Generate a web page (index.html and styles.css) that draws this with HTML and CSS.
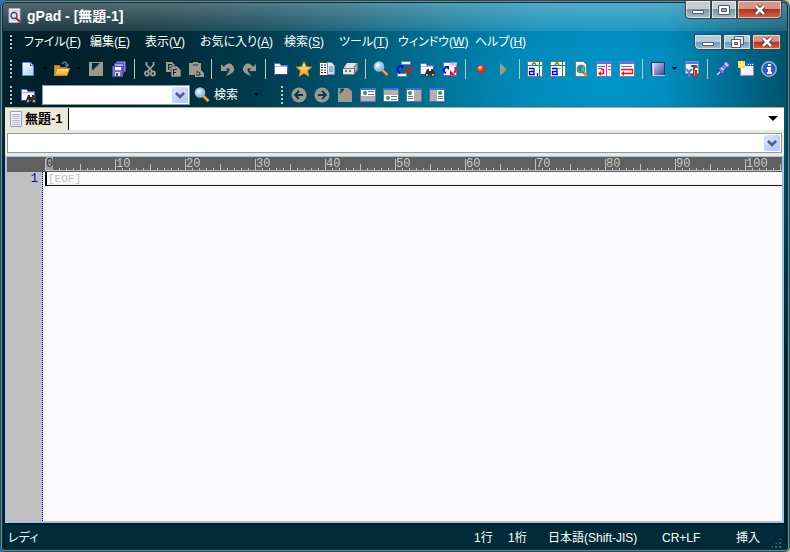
FILE: index.html
```html
<!DOCTYPE html>
<html lang="ja">
<head>
<meta charset="utf-8">
<title>gPad - [無題-1]</title>
<link rel="stylesheet" href="styles.css">
</head>
<body>
<svg class="defs" aria-hidden="true">
  <defs>
    <linearGradient id="paper" x1="0" y1="0" x2="1" y2="1"><stop offset="0" stop-color="#fff"/><stop offset="1" stop-color="#a9cdf5"/></linearGradient>
    <linearGradient id="gold" x1="0" y1="0" x2="0" y2="1"><stop offset="0" stop-color="#fff0a0"/><stop offset="1" stop-color="#f0a010"/></linearGradient>
    <linearGradient id="violet" x1="0" y1="0" x2="1" y2="1"><stop offset="0" stop-color="#dcdcff"/><stop offset="1" stop-color="#3c3c98"/></linearGradient>
    <radialGradient id="lens" cx=".35" cy=".35"><stop offset="0" stop-color="#fff"/><stop offset="1" stop-color="#8cc4ee"/></radialGradient>
    <radialGradient id="ball" cx=".35" cy=".3"><stop offset="0" stop-color="#ffd8c8"/><stop offset="1" stop-color="#c83418"/></radialGradient>
    <symbol id="folder" viewBox="0 0 16 16"><path d="M1.500 2.500h5l1.500 2h6.500v9h-13z" fill="#fff" stroke="#7468c8"/><path d="M2 5.500h12" stroke="#b8b0f0"/><path d="M2 13.500h13v-8" fill="none" stroke="#4838a0"/></symbol>
    <symbol id="binoc" viewBox="0 0 10 8"><path d="M2 0h2v2h2V0h2l2 5v3H6V5H4v3H0V5z" fill="#333"/><path d="M1 5h2v2H1zM7 5h2v2H7z" fill="#aaa"/></symbol>
    <symbol id="glass" viewBox="0 0 16 16"><path d="M9.500 9.500l5 5" stroke="#70501c" stroke-width="3.500"/><path d="M9.500 9l5 5" stroke="#eeb84c" stroke-width="2"/><circle cx="6" cy="5.500" r="4.700" fill="url(#lens)" stroke="#9db6d0" stroke-width="1.300"/></symbol>
    <symbol id="pane" viewBox="0 0 16 16"><path d="M.5 1.500h15v13H.5z" fill="#b0b0b0" stroke="#707078"/><path d="M0 1h16v2H0z" fill="#386fd8"/></symbol>
    <symbol id="card" viewBox="0 0 14 6"><path d="M0 0h14v6H0z" fill="#fff"/><circle cx="4" cy="3" r="2" fill="#219b68"/><path d="M7 1.500h6M7 4.500h6" stroke="#5878a8"/></symbol>
    <symbol id="doc" viewBox="0 0 16 16"><path d="M.5.5h15v15H.5z" fill="#f4f4ff" stroke="#777a90"/><path d="M1 1h14v2H1z" fill="#4a78e8"/></symbol>
    <symbol id="chev" viewBox="0 0 16 16"><path d="M4 6l4 4 4-4" fill="none" stroke="#4a6185" stroke-width="2.500"/></symbol>
    <symbol id="down" viewBox="0 0 7 4"><path d="M1 0h5L3.500 3z" fill="#000"/></symbol>
  </defs>
</svg>

<main class="window">
  <header class="titlebar">
    <svg class="appicon" viewBox="0 0 14 16"><path d="M1 .5h11v14H1z" fill="#f4f2f8" stroke="#b8a8bc"/><path d="M3 3h7M3 12h5" stroke="#c8a8a8"/><circle cx="6" cy="7.500" r="3" fill="#dce8ff" stroke="#404c88" stroke-width="1.500"/><path d="M8 10l4 4" stroke="#902828" stroke-width="2"/></svg>
    <h1>gPad - [無題-1]</h1>
    <div class="controls">
      <button aria-label="最小化"><svg viewBox="0 0 14 12"><path d="M1.500 6.500h11v3h-11z" fill="#fff" stroke="#555b68"/></svg></button>
      <button aria-label="最大化"><svg viewBox="0 0 14 12"><path d="M1.500 1.500h11v9h-11z" fill="#fff" stroke="#555b68"/><path d="M4.500 4.500h5v3h-5z" fill="#9ab" stroke="#555b68"/></svg></button>
      <button class="close" aria-label="閉じる"><svg viewBox="0 0 14 12"><path d="M3 2l8 8M11 2l-8 8" stroke="#533" stroke-width="4.500"/><path d="M3 2l8 8M11 2l-8 8" stroke="#fff" stroke-width="2.500"/></svg></button>
    </div>
  </header>

  <nav class="menubar">
    <i class="grip"></i>
    <div class="menus">
      <button>ファイル(<u>F</u>)</button><button>編集(<u>E</u>)</button><button>表示(<u>V</u>)</button><button>お気に入り(<u>A</u>)</button><button>検索(<u>S</u>)</button><button>ツール(<u>T</u>)</button><button>ウィンドウ(<u>W</u>)</button><button>ヘルプ(<u>H</u>)</button>
    </div>
    <div class="controls child">
      <button aria-label="文書を最小化"><svg viewBox="0 0 14 12"><path d="M1.500 6.500h11v3h-11z" fill="#fff" stroke="#555b68"/></svg></button>
      <button aria-label="文書を元に戻す"><svg viewBox="0 0 14 12"><path d="M4.500.5h9v8h-9z" fill="#dde6f0" stroke="#555b68"/><path d="M1.500 3.500h9v8h-9z" fill="#fff" stroke="#555b68"/><path d="M4.500 6.500h3v2h-3z" fill="#9ab" stroke="#555b68"/></svg></button>
      <button class="close" aria-label="文書を閉じる"><svg viewBox="0 0 14 12"><path d="M3 2l8 8M11 2l-8 8" stroke="#533" stroke-width="4.500"/><path d="M3 2l8 8M11 2l-8 8" stroke="#fff" stroke-width="2.500"/></svg></button>
    </div>
  </nav>

  <div class="toolbar main">
    <i class="grip"></i>
    <button class="tool" aria-label="新規作成"><svg viewBox="0 0 16 16"><path d="M2.500 1.500h8l3 3v10h-11z" fill="url(#paper)" stroke="#5e8fd8"/><path d="M10.500 1.500v3h3" fill="#dfeeff" stroke="#3868b8"/></svg></button>
    <button class="drop" aria-label="新規作成の種類"><svg><use href="#down"/></svg></button>
    <button class="tool" aria-label="開く"><svg viewBox="0 0 16 16"><path d="M.5 4.500h5l1 2h6v8h-12z" fill="#d89828" stroke="#b87818"/><path d="M3 7.500h12.500L13 14.500H.5z" fill="url(#gold)" stroke="#c88820"/><path d="M8 3c2-3 5-2 5 1" fill="none" stroke="#5f7888" stroke-width="1.500"/><path d="M10.500 3.500h5l-2.500 3z" fill="#5f7888"/></svg></button>
    <button class="drop" aria-label="最近のファイル"><svg><use href="#down"/></svg></button>
    <button class="tool" aria-label="保存"><svg viewBox="0 0 16 16"><path d="M1 1h14v14H1z" fill="#9c988c"/><path d="M4 2h8L5 9H4z" fill="#052a36"/></svg></button>
    <button class="tool" aria-label="すべて保存"><svg viewBox="0 0 16 16"><path d="M5.500.5h9v10h-9z" fill="#8c88e0" stroke="#5350a8"/><path d="M3.500 2.500h9v10h-9z" fill="#a4a0f0" stroke="#5350a8"/><path d="M1.500 5.500h10v10h-10z" fill="#7470d0" stroke="#5350a8"/><path d="M4 6h6v3H4z" fill="#fff"/><path d="M4 11h5v4H4z" fill="#ddf"/><path d="M5 12h2v3H5z" fill="#446"/></svg></button>
    <i class="sep"></i>
    <button class="tool" aria-label="切り取り"><svg viewBox="0 0 16 16" fill="none" stroke="#a09c90" stroke-width="1.800"><path d="M4.500 1v3L10 10M11.500 1v3L6 10"/><circle cx="5" cy="12.500" r="2"/><circle cx="11" cy="12.500" r="2"/></svg></button>
    <button class="tool" aria-label="コピー"><svg viewBox="0 0 16 16"><path d="M1 1h6l3 3v7H1z" fill="#a09c90"/><path d="M6 5h6l4 4v7H6z" fill="#a09c90" stroke="#052a36" stroke-width=".6"/><path d="M3 3.500h4M3 6.500h2M3.500 3v6M8 8.500h4M8 11.500h3M8.500 8v6" stroke="#052a36"/></svg></button>
    <button class="tool" aria-label="貼り付け"><svg viewBox="0 0 16 16"><path d="M1 2h4V1h5v1h3v7l3 3v4H7v-2H1z" fill="#9c988c"/><path d="M8 11h3l1 2v1H8M5 4h5" stroke="#0a3a48" fill="none"/></svg></button>
    <i class="sep"></i>
    <button class="tool" aria-label="元に戻す"><svg viewBox="0 0 16 16"><path d="M2 3v7h7L7 8c3-2 5 0 2 4l-2 3c7-2 10-6 7-10-2-4-7-3-9 1z" fill="#9c988c"/></svg></button>
    <button class="tool" aria-label="やり直し"><svg viewBox="0 0 16 16"><path d="M14 3v7H7l2-2C6 6 4 8 7 12l2 3C2 13-1 9 2 5c2-4 7-3 9 1z" fill="#9c988c"/></svg></button>
    <i class="sep"></i>
    <button class="tool" aria-label="フォルダ"><svg><use href="#folder"/></svg></button>
    <button class="tool" aria-label="お気に入り"><svg viewBox="0 0 16 16"><path d="M8 .8l2.200 5 5.300.4-4 3.500 1.200 5.500L8 12.300l-4.700 2.900 1.200-5.500-4-3.500 5.300-.4z" fill="url(#gold)" stroke="#d89018"/></svg></button>
    <button class="tool" aria-label="アウトライン"><svg viewBox="0 0 16 16"><path d="M.5 1.500h8v13h-8z" fill="#fff" stroke="#444"/><path d="M2 4h2M2 6.500h2M2 9h2M2 11.500h2M5 4h2M5 6.500h2M5 9h2M5 11.500h2" stroke="#223"/><path d="M8.500 1.500h4l3 3v9h-7z" fill="url(#paper)" stroke="#7890b8"/><path d="M10 6h4M10 8h4M10 10h4" stroke="#5878a8"/></svg></button>
    <button class="tool" aria-label="キーボードマクロ"><svg viewBox="0 0 16 16"><path d="M5 2h11v7l-4 5H1V8z" fill="#777"/><path d="M5 2h10l-3 3H3zM3 5h9v2H2zM1 8h11v5H1z" fill="#e4e4e4"/><path d="M13 5l2-2v5l-2 3z" fill="#aaa"/><path d="M3 9h2v2H3zM7 9h2v2H7z" fill="#777"/></svg></button>
    <i class="sep"></i>
    <button class="tool" aria-label="検索"><svg><use href="#glass"/></svg></button>
    <button class="tool" aria-label="置換"><svg viewBox="0 0 16 16"><path d="M5.500.5h9v3h-9zM1.500 12.500h9v3h-9z" fill="#eef4ff" stroke="#6684b0"/><path d="M4 5c-4 2-3 6 0 7" fill="none" stroke="#0010e8" stroke-width="2"/><path d="M2 4h5v4z" fill="#0010e8"/><path d="M12 11c3-2 3-4 2-6" fill="none" stroke="#f01010" stroke-width="2"/><path d="M9 7v5h5z" fill="#f01010"/></svg></button>
    <button class="tool" aria-label="ファイルから検索"><svg viewBox="0 0 16 16"><use href="#folder" width="16" height="16"/><use href="#binoc" x="6" y="8" width="10" height="8"/></svg></button>
    <button class="tool" aria-label="ファイルの置換"><svg viewBox="0 0 16 16"><path d="M1.500 1.500h13v13h-13z" fill="#fff" stroke="#7468c8"/><path d="M8 1.500h7v3H8z" fill="#b8c4f0"/><path d="M4 6c-3 2-3 5 0 6" fill="none" stroke="#0010e8" stroke-width="2"/><path d="M2 5h5v4z" fill="#0010e8"/><path d="M12 12c2-2 2-4 1-6" fill="none" stroke="#f01010" stroke-width="2"/><path d="M8 9v5h5z" fill="#f01010"/></svg></button>
    <i class="sep"></i>
    <button class="tool" aria-label="マクロの記録"><svg viewBox="0 0 16 16"><circle cx="8" cy="8" r="4" fill="url(#ball)" stroke="#b03820"/></svg></button>
    <button class="tool" aria-label="マクロの再生"><svg viewBox="0 0 16 16"><path d="M4 2l7 6.500L4 15z" fill="#9c988c"/></svg></button>
    <i class="sep"></i>
    <button class="tool" aria-label="半角に変換"><svg viewBox="0 0 16 16"><path d="M.5.5h15v15H.5z" fill="#fff" stroke="#777"/><path d="M0 4.500h16M12.500 0v16" stroke="#15837c"/><path d="M5 4l2-3 2 3" fill="none" stroke="#8a8400" stroke-width="1.500"/><path d="M2 7.500h5v6H2.500v-3H7M7 13.500h1M10.500 12v3" fill="none" stroke="#0000e8" stroke-width="1.300"/></svg></button>
    <button class="tool" aria-label="全角に変換"><svg viewBox="0 0 16 16"><path d="M.5.5h15v15H.5z" fill="#fff" stroke="#777"/><path d="M0 4.500h16M12.500 0v16" stroke="#15837c"/><path d="M5 4l2-3 2 3" fill="none" stroke="#8a8400" stroke-width="1.500"/><path d="M2 7.500h5v6H2.500v-3H7M7 13.500h1" fill="none" stroke="#0000e8" stroke-width="1.300"/><path d="M8.500 8l1-1 1 1" fill="none" stroke="#666"/></svg></button>
    <button class="tool" aria-label="ブラウザで表示"><svg viewBox="0 0 16 16"><path d="M2.500.5h8l3 3v12h-11z" fill="#f4f4f4" stroke="#777"/><path d="M10 11l4 4" stroke="#c89028" stroke-width="2.500"/><circle cx="8" cy="8" r="4" fill="#5ca8d8" stroke="#4878a0"/><path d="M5 7l3-3 2 2-2 2 1 3-3-1z" fill="#1d9a38"/></svg></button>
    <button class="tool" aria-label="折り返し位置"><svg viewBox="0 0 16 16"><use href="#doc" width="16" height="16"/><path d="M2 5.500h7M2 7.500h4M12 5.500h3M12 8.500h3" stroke="#777"/><path d="M10.500 3v12" stroke="#f020d8"/><path d="M5 8.500h2.500v4H4" fill="none" stroke="#e81818" stroke-width="1.300"/><path d="M5 10v5l-3-2.500z" fill="#e81818"/></svg></button>
    <button class="tool" aria-label="ウィンドウ幅で折り返す"><svg viewBox="0 0 16 16"><use href="#doc" width="16" height="16"/><path d="M2 5.500h11" stroke="#777"/><path d="M2 8.500h11.500v4H4" fill="none" stroke="#e81818" stroke-width="1.300"/><path d="M5 10v5l-3-2.500z" fill="#e81818"/></svg></button>
    <i class="sep"></i>
    <button class="tool" aria-label="モード"><svg viewBox="0 0 16 16"><path d="M1.500 1.500h13v13h-13z" fill="url(#violet)" stroke="#30306c"/><path d="M3.500 2v12" stroke="#eeeeff"/><path d="M2 14.500h13" stroke="#ccc"/></svg></button>
    <button class="drop" aria-label="モードの選択"><svg><use href="#down"/></svg></button>
    <button class="tool" aria-label="オプション"><svg viewBox="0 0 16 16"><path d="M1.500.5h13v12h-13z" fill="#f0f2ff" stroke="#888ca0"/><path d="M1 1h14v2H1z" fill="#4a78e8"/><path d="M2 8l3 3 3-3M5 11v5" fill="none" stroke="#6878c8" stroke-width="2"/><path d="M7 4h6l1 3h-3v2H9V6H7z" fill="#555"/><path d="M9 9h4v7H9z" fill="#c42c20"/><path d="M10.500 9v6" stroke="#f08070"/></svg></button>
    <i class="sep"></i>
    <button class="tool" aria-label="常に手前に表示"><svg viewBox="0 0 16 16"><path d="M6 10l-4 4" stroke="#dde" stroke-width="1.500"/><path d="M3 7l3-1 3-3V1l3-1 3 4-1 2h-2l-3 3v3l-2 1z" fill="#7784e0" stroke="#3d4aac"/><path d="M6 7l3 2M10 2l3 3" stroke="#e0e4ff" stroke-width="1.500"/></svg></button>
    <button class="tool" aria-label="新しいウィンドウ"><svg viewBox="0 0 16 16"><path d="M2.500 2.500h13v12h-13z" fill="#f0f2ff" stroke="#888ca0"/><path d="M3 2h13v3H3z" fill="#2a62dc"/><path d="M10 3h1v1h-1zM12 3h1v1h-1zM14 3h1v1h-1z" fill="#fff"/><path d="M0 0h7v7H0z" fill="#ffe038"/><path d="M3.500 0v7M0 3.500h7" stroke="#fff8b0"/></svg></button>
    <button class="tool" aria-label="バージョン情報"><svg viewBox="0 0 16 16"><circle cx="8" cy="8" r="7.200" fill="#2859d0" stroke="#aab0b8" stroke-width="1.500"/><path d="M7 3h3v2H7zM6 6h4v5h1v2H6v-2h1V8H6z" fill="#fff"/></svg></button>
  </div>

  <div class="toolbar">
    <i class="grip"></i>
    <button class="tool" aria-label="ファイル検索"><svg viewBox="0 0 16 16"><use href="#folder" width="16" height="16"/><use href="#binoc" x="6" y="8" width="10" height="8"/></svg></button>
    <div class="combo search"><select aria-label="検索文字列"><option></option></select><svg><use href="#chev"/></svg></div>
    <button class="find"><svg><use href="#glass"/></svg>検索</button>
    <button class="drop wide" aria-label="検索オプション"><svg><use href="#down"/></svg></button>
    <i class="grip second"></i>
    <button class="tool" aria-label="戻る"><svg viewBox="0 0 16 16"><circle cx="8" cy="8" r="7.500" fill="#9c988c"/><path d="M8 4L4 8l4 4M4.500 8H12" fill="none" stroke="#003848" stroke-width="1.800"/></svg></button>
    <button class="tool" aria-label="進む"><svg viewBox="0 0 16 16"><circle cx="8" cy="8" r="7.500" fill="#9c988c"/><path d="M8 4l4 4-4 4M11.500 8H4" fill="none" stroke="#004058" stroke-width="1.800"/></svg></button>
    <button class="tool" aria-label="ファイルを開く"><svg viewBox="0 0 16 16"><path d="M1 1h10l4 3v11H1z" fill="#9c988c"/><path d="M3 2.500h4M6.500 2L3 6" stroke="#004860" stroke-width="1.500"/></svg></button>
    <button class="tool" aria-label="上に表示"><svg viewBox="0 0 16 16"><use href="#pane" width="16" height="16"/><use href="#card" x="1" y="3" width="14" height="6"/></svg></button>
    <button class="tool" aria-label="下に表示"><svg viewBox="0 0 16 16"><use href="#pane" width="16" height="16"/><use href="#card" x="1" y="8" width="14" height="6"/></svg></button>
    <button class="tool" aria-label="左に表示"><svg viewBox="0 0 16 16"><use href="#pane" width="16" height="16"/><path d="M1 3h7v11H1z" fill="#fff"/><circle cx="4" cy="6" r="2" fill="#219b68"/><path d="M2 9.500h5M2 11.500h5" stroke="#5878a8"/></svg></button>
    <button class="tool" aria-label="右に表示"><svg viewBox="0 0 16 16"><use href="#pane" width="16" height="16"/><path d="M8 3h7v11H8z" fill="#fff"/><circle cx="11" cy="6" r="2" fill="#219b68"/><path d="M9 9.500h5M9 11.500h5" stroke="#5878a8"/></svg></button>
  </div>

  <section class="client">
    <div class="tabs">
      <button class="tab"><svg viewBox="0 0 14 16"><path d="M1.500.5h11v15h-11z" fill="#f6f6ff" stroke="#9898b8"/><path d="M3 3.500h8M3 5.500h8M3 7.500h8M3 9.500h8M3 11.500h8M3 13.500h8" stroke="#b0b0c8"/></svg>無題-1</button>
      <button class="tablist" aria-label="タブ一覧"><svg viewBox="0 0 10 6"><path d="M0 0h10L5 5z" fill="#000"/></svg></button>
    </div>
    <div class="outline">
      <div class="combo"><select aria-label="アウトライン"><option></option></select><svg><use href="#chev"/></svg></div>
    </div>
    <div class="editor">
      <div class="ruler">
        <span><b>0</b></span><span>10</span><span>20</span><span>30</span><span>40</span><span>50</span><span>60</span><span>70</span><span>80</span><span>90</span><span>100</span>
      </div>
      <div class="page">
        <div class="gutter">1</div>
        <div class="text"><p>[EOF]</p></div>
      </div>
    </div>
  </section>

  <footer class="status">
    <span>レディ</span><span>1行</span><span>1桁</span><span>日本語(Shift-JIS)</span><span>CR+LF</span><span>挿入</span>
    <i class="resize"></i>
  </footer>
</main>
</body>
</html>
```
FILE: styles.css
```css
* { box-sizing: border-box; }

body {
  margin: 0;
  background: linear-gradient(90deg, #1c7fe0 50%, #d8d0a0 50%);
  font: 12px/16px "Liberation Sans", "Noto Sans CJK JP", sans-serif;
  font-feature-settings: "palt";
}

button {
  display: flex;
  align-items: center;
  padding: 0;
  border: 0;
  background: none;
  color: inherit;
  font: inherit;
  font-feature-settings: inherit;
  white-space: nowrap;
}

svg { flex: none; width: 16px; height: 16px; }
.defs { position: absolute; width: 0; height: 0; }

.window {
  display: flex;
  flex-direction: column;
  min-height: 100vh;
  padding: 1px 6px 3px 5px;
  border-radius: 7px 7px 5px 5px;
  overflow: hidden;
  color: #fff;
  background:
    linear-gradient(rgba(255, 255, 255, .34), rgba(255, 255, 255, .12)) 0 0 / 100% 31px no-repeat,
    linear-gradient(90deg, transparent 84%, rgba(0, 25, 35, .35)),
    radial-gradient(ellipse 610px 440px at 77% 80px, #0096ca 0%, #0087b6 16%, #007094 30%, #00546f 44%, #003c50 57%, #002834 74%, #001f2a 90%, #00222e 100%);
  box-shadow: inset 0 0 0 1px #3c4448, inset 0 0 0 2px #5793a3, inset 0 0 0 3px #08303e;
}

.titlebar {
  display: flex;
  align-items: center;
  height: 30px;
  padding-left: 3px;
}
.appicon { width: 14px; }
h1 {
  flex: 1;
  margin: 0 0 0 5px;
  font-size: 14px;
  line-height: 20px;
}

.controls { display: flex; align-self: flex-start; margin-right: 2px; }
.controls button {
  justify-content: center;
  width: 26px;
  height: 18px;
  border: 1px solid #34454e;
  border-top: 0;
  box-shadow: inset 0 0 0 1px rgba(255, 255, 255, .6);
  background: linear-gradient(#c4ccd4 50%, #7c94a4 50%, #a9bdca);
}
.controls button:first-child { border-radius: 0 0 0 5px; }
.controls svg { width: 14px; height: 12px; }
.controls .close {
  width: 45px;
  border-radius: 0 0 5px 0;
  background: linear-gradient(#d8958a 45%, #b5321c 50%, #cc6650);
}
.controls.child { gap: 1px; align-self: center; margin-right: 3px; }
.child button, .child .close {
  width: 28px;
  height: 16px;
  border-top: 1px solid #24485c;
  border-radius: 2px;
}
.controls.child .close { width: 29px; border-radius: 2px; }
.child button:not(.close) { background: linear-gradient(#b4cbdc 50%, #6d99b8 50%, #9dbdd3); }

.grip {
  flex: none;
  width: 2px;
  height: 18px;
  margin: 0 4px 0 5px;
  background: repeating-linear-gradient(#c9c5b0 0 2px, transparent 2px 4px);
}

.menubar { display: flex; align-items: center; height: 22px; margin-bottom: 2px; }
.menubar .grip { height: 14px; }
.menus {
  display: grid;
  flex: 1;
  grid-template-columns: 66px 55px 55px 84px 55px 59px 77px auto;
  margin-left: 8px;
}

.toolbar { display: flex; align-items: center; height: 24px; }
.toolbar.main { height: 28px; }
.toolbar .grip { height: 18px; }
.tool { flex: none; justify-content: center; width: 23px; height: 24px; }
.drop { flex: none; justify-content: center; width: 11px; height: 24px; }
.drop svg { width: 7px; height: 4px; }
.sep {
  flex: none;
  width: 8px;
  height: 20px;
  background: linear-gradient(#c8c4b0, #c8c4b0) center / 1px 100% no-repeat;
}

.combo {
  display: flex;
  height: 20px;
  padding: 1px;
  border: 1px solid #7f9db9;
  background: #fff;
}
.combo select {
  flex: 1;
  min-width: 0;
  border: 0;
  appearance: none;
  background: #fff;
}
.combo svg {
  border-radius: 2px;
  background: linear-gradient(135deg, #dce6ff, #b0c6f8);
}
.search { width: 148px; margin-left: 3px; }
.find { gap: 4px; width: 54px; margin-left: 4px; }
.wide { width: 16px; }
.grip.second { margin-left: 17px; }

.client {
  display: flex;
  flex: 1;
  flex-direction: column;
  border-top: 1px solid #aca899;
  background: #ece9d8;
  color: #000;
}
.tabs {
  display: flex;
  justify-content: space-between;
  height: 22px;
  background: #fff;
}
.tab {
  gap: 2px;
  padding: 0 5px 0 4px;
  border-right: 1px solid #000;
  background: #ece9d8;
  font-size: 13px;
  font-weight: bold;
}
.tab svg { width: 14px; }
.tablist { padding-right: 6px; }
.tablist svg { width: 10px; height: 6px; }
.outline { padding: 3px 2px; }

.editor {
  display: flex;
  flex: 1;
  flex-direction: column;
  border: 2px solid #a8c0e8;
  border-top-width: 1px;
  background: #fafaff;
  font-family: "Liberation Mono", monospace;
}
.ruler {
  display: flex;
  height: 15px;
  padding-left: 38px;
  overflow: hidden;
  color: #c8c8c8;
  background: #606060;
  line-height: 14px;
}
.ruler span {
  flex: none;
  width: 70px;
  padding-left: 1px;
  background:
    linear-gradient(#c0c0c0, #c0c0c0) 0 2px / 1px 12px no-repeat,
    linear-gradient(#c0c0c0, #c0c0c0) 35px 7px / 1px 6px no-repeat,
    linear-gradient(#c0c0c0, #c0c0c0) 0 13px / 100% 1px no-repeat,
    repeating-linear-gradient(90deg, #c0c0c0 0 1px, transparent 1px 7px) 0 11px / 100% 2px no-repeat;
}
.ruler b {
  display: inline-block;
  height: 13px;
  background: #a0a0a0;
  color: #333;
  font-weight: normal;
}

.page { display: flex; flex: 1; }
.gutter {
  width: 36px;
  padding-right: 4px;
  border-right: 1px dotted #0000e0;
  background: #c0c0c0;
  color: #0000c8;
  line-height: 14px;
  text-align: right;
}
.text { flex: 1; padding-left: 2px; }
.text p {
  height: 14px;
  margin: 0;
  padding-left: 1px;
  border-left: 2px solid #000;
  border-bottom: 1px solid #0000b8;
  color: #c0c0c0;
  font-size: 11px;
  line-height: 14px;
}

.status {
  display: grid;
  grid-template-columns: 1fr 34px 40px 114px 74px 34px 15px;
  align-items: center;
  height: 26px;
  margin-right: -1px;
  padding: 4px 0 0 3px;
  background: linear-gradient(#001820, #002c3a 3px, #002b38);
}
.resize {
  align-self: end;
  width: 12px;
  height: 12px;
  background: radial-gradient(circle, #2b6472 1px, transparent 1px) 0 0 / 4px 4px;
  clip-path: polygon(100% 0, 100% 100%, 0 100%);
}
```
